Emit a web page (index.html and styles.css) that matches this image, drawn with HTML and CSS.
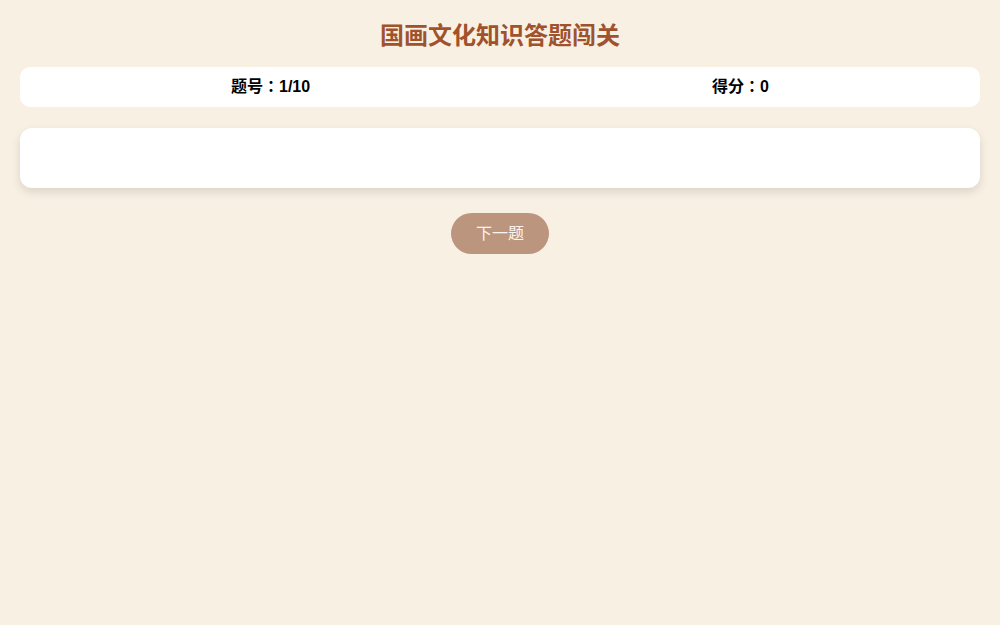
FILE: index.html
```html
<!DOCTYPE html>
<html lang="zh">
<head>
  <meta charset="UTF-8" />
  <meta name="viewport" content="width=device-width, initial-scale=1.0" />
  <title>国画文化知识答题闯关</title>
  <link rel="stylesheet" href="styles.css">
</head>
<body>
  <div class="container">
    <h1>国画文化知识答题闯关</h1>

    <!-- Progress & Score -->
    <div class="status-bar">
      <div class="status-item">题号：<span id="qnum">1/10</span></div>
      <div class="status-item">得分：<span id="score">0</span></div>
    </div>

    <!-- Question Card -->
    <div class="question-card" id="question"></div>

    <!-- Next Button -->
    <div class="actions">
      <button class="next-btn" id="next-btn" disabled>下一题</button>
    </div>
  </div>
</body>
</html>
```

FILE: styles.css
```css
/* Reset & Global Styles */
* {
  box-sizing: border-box;
  font-family: 'Liberation Sans', Arial, 'Noto Sans CJK SC', sans-serif;
}
body {
  background: #f8f0e3;
  margin: 0;
  padding: 20px;
}
.container {
  width: 100%;
}
h1 {
  color: #a0522d;
  text-align: center;
  font-size: 24px;
  line-height: 32px;
  margin: 0 0 15px;
}
.status-bar {
  display: flex;
  justify-content: space-around;
  background: white;
  border-radius: 10px;
  padding: 10px;
  margin-bottom: 21px;
}
/* centred full-width colon */
.status-item {
  font-family: 'Liberation Sans', Arial, 'Noto Sans CJK JP', sans-serif;
  font-feature-settings: "locl" 0;
  font-size: 16px;
  font-weight: bold;
  line-height: 20px;
  color: #000;
}
.question-card {
  background: white;
  border-radius: 12px;
  box-shadow: 0 4px 10px rgba(0, 0, 0, 0.12);
  padding: 20px;
  min-height: 60px;
  margin-bottom: 25px;
}
.actions {
  display: flex;
  justify-content: center;
}
.next-btn {
  background: #bb957e;
  color: #fbf3ec;
  border: none;
  border-radius: 21px;
  padding: 10px 25px;
  font-size: 16px;
  line-height: 21px;
  cursor: pointer;
}
.next-btn:disabled {
  cursor: not-allowed;
}
```
